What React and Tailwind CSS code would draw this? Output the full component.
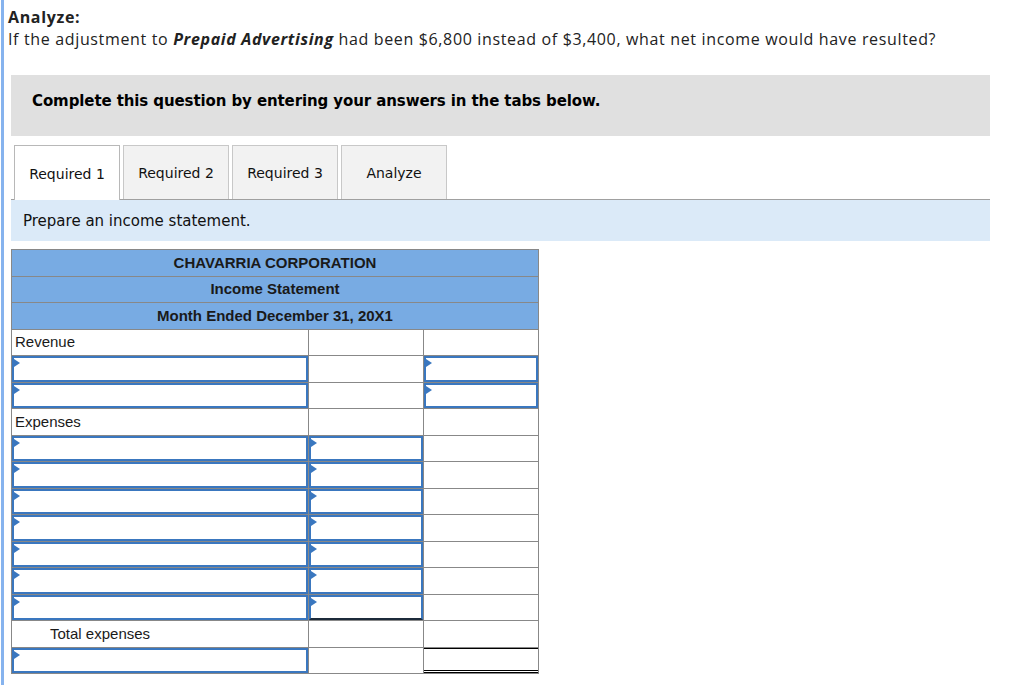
import React from 'react'

const blue = 'border-[#3a77bf]'

const Arrow = () => (
    <span className="absolute left-0 top-[1px] w-0 h-0 border-y-[4px] border-y-transparent border-l-[6px] border-l-[#3a77bf]" />
)

const InputCell = ({ underline }) => (
    <td className="p-0 border border-[#888] h-[26.5px]">
        <div className={`relative h-full w-full border-2 ${blue} ${underline ? 'border-b-[#1c2a3a]' : ''}`}>
            <Arrow />
        </div>
    </td>
)

const TextCell = ({ children, indent }) => (
    <td className={`border border-[#888] h-[26.5px] px-[3px] text-[15px] text-[#1a1a1a] ${indent ? 'pl-[38px]' : ''}`}>
        {children}
    </td>
)

const Empty = ({ className = '' }) => <td className={`border border-[#888] h-[26.5px] ${className}`} />

const tabs = ['Required 1', 'Required 2', 'Required 3', 'Analyze']

export default function App() {
    return (
        <div className="min-h-[685px] bg-white ml-px border-l-[3px] border-[#86b3ee] pl-[4px] pr-[34px]">
            <div className="font-['Open_Sans',sans-serif] text-[16px] leading-[22px] tracking-[0.65px] text-[#222] pt-[6px]">
                <div className="font-bold">Analyze:</div>
                <div>
                    If the adjustment to <b><i>Prepaid Advertising</i></b> had been $6,800 instead of $3,400, what net income would have resulted?
                </div>
            </div>

            <div className="mt-[25px] ml-[3px] bg-[#e0e0e0] h-[61px] pl-[21px] pt-[15px] font-['DejaVu_Sans',sans-serif] font-bold text-[15px] tracking-[-0.1px] text-black">
                Complete this question by entering your answers in the tabs below.
            </div>

            <div className="mt-[9px] ml-[3px] flex items-end border-b border-[#a0a0a0] font-['DejaVu_Sans',sans-serif] text-[14px] text-[#111]">
                <div className="w-[3px]" />
                {tabs.map((t, i) => (
                    <div
                        key={t}
                        className={`w-[106px] h-[54px] mr-[3px] flex items-center justify-center pt-[2px] border border-b-0 ${i === 0 ? 'bg-white border-[#b8b8b8] -mb-px h-[55px]' : 'bg-[#f2f2f2] border-[#c8c8c8]'}`}
                    >
                        {t}
                    </div>
                ))}
            </div>

            <div className="ml-[3px] bg-[#dbeaf8] h-[41px] flex items-center pt-[2px] pl-[12px] font-['DejaVu_Sans',sans-serif] text-[15px] text-[#111]">
                Prepare an income statement.
            </div>

            <table className="mt-[8px] ml-[3px] border-collapse table-fixed w-[527px] font-['Liberation_Sans',sans-serif]">
                <colgroup>
                    <col className="w-[297px]" />
                    <col className="w-[115px]" />
                    <col className="w-[115px]" />
                </colgroup>
                <tbody>
                    {['CHAVARRIA CORPORATION', 'Income Statement', 'Month Ended December 31, 20X1'].map(h => (
                        <tr key={h}>
                            <td colSpan={3} className="h-[26.5px] bg-[#78abe3] border border-[#888] text-center font-bold text-[15px] text-[#1a1a1a]">
                                {h}
                            </td>
                        </tr>
                    ))}
                    <tr>
                        <TextCell>Revenue</TextCell>
                        <Empty />
                        <Empty />
                    </tr>
                    {[0, 1].map(i => (
                        <tr key={'r' + i}>
                            <InputCell />
                            <Empty />
                            <InputCell />
                        </tr>
                    ))}
                    <tr>
                        <TextCell>Expenses</TextCell>
                        <Empty />
                        <Empty />
                    </tr>
                    {[0, 1, 2, 3, 4, 5, 6].map(i => (
                        <tr key={'e' + i}>
                            <InputCell />
                            <InputCell underline={i === 6} />
                            <Empty />
                        </tr>
                    ))}
                    <tr>
                        <TextCell indent>Total expenses</TextCell>
                        <Empty />
                        <Empty />
                    </tr>
                    <tr>
                        <InputCell />
                        <Empty />
                        <td className="p-0 border border-[#888] h-[26.5px]">
                            <div className="h-full border-t border-t-black border-b-[3px] border-b-black border-double" />
                        </td>
                    </tr>
                </tbody>
            </table>
        </div>
    )
}
